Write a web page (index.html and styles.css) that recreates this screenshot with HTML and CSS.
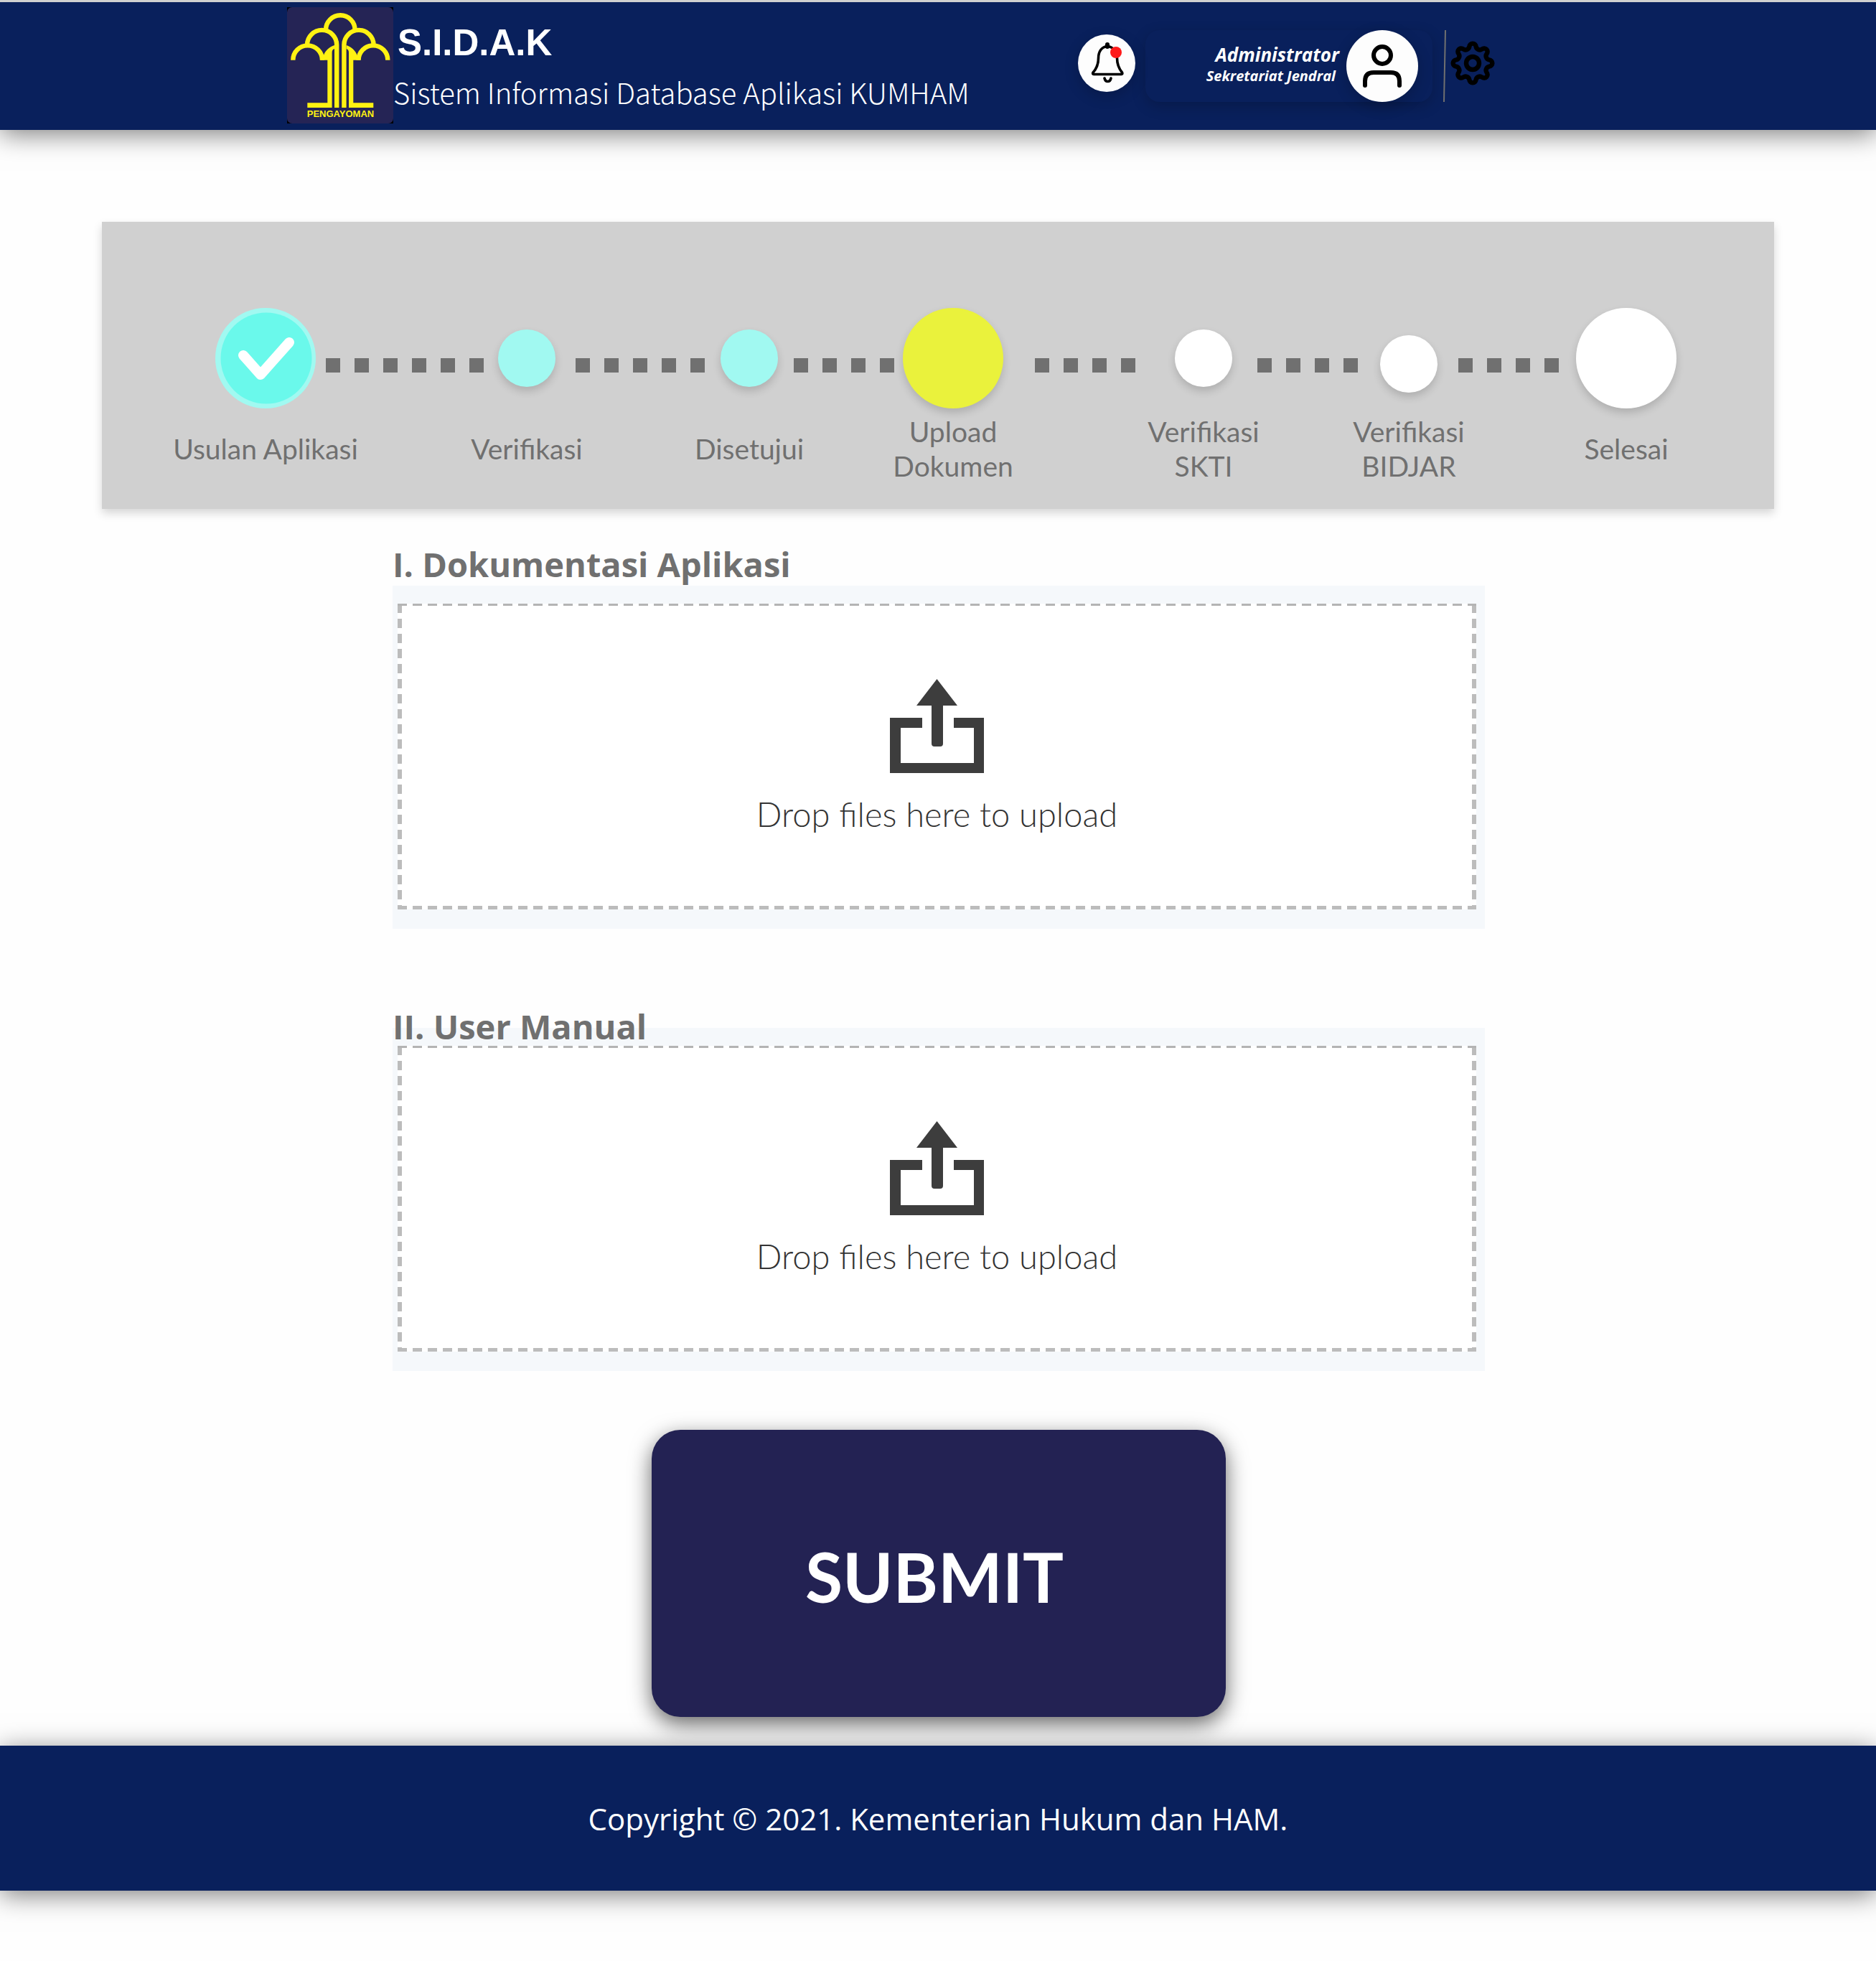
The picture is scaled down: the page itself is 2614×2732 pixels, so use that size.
FILE: index.html
```html
<!DOCTYPE html>
<html lang="id">
<head>
<meta charset="utf-8">
<meta name="viewport" content="width=device-width, initial-scale=1">
<title>S.I.D.A.K</title>
<link rel="stylesheet" href="styles.css">
</head>
<body>
<header class="topbar">
  <div class="brand">
    <svg class="brand-logo" viewBox="0 0 148 162" role="img" aria-label="Pengayoman">
      <rect width="148" height="162" fill="#000"/>
      <rect width="148" height="162" rx="7" fill="#252455"/>
      <g fill="none" stroke="#fff212" stroke-width="6.4">
        <path d="M54 31.5A20.3 20.3 0 0 1 94.6 31.5"/>
        <path d="M28 52.5A20.5 20.5 0 0 1 69.2 52.5V140"/>
        <path d="M120.6 52.5A20.5 20.5 0 0 0 79.4 52.5V140"/>
        <path d="M8.3 73.7A20 20 0 0 1 49 73.7"/>
        <path d="M140.3 73.7A20 20 0 0 0 99.6 73.7"/>
      </g>
      <g fill="#fff212">
        <path d="M46 73.7 51 67C53 61 59 55 66 53V58Q62.6 59 62.6 63V140H28.3V133.3H56.3V73.7Z"/>
        <path d="M102.6 73.7 97.6 67C95.6 61 89.6 55 82.6 53V58Q86 59 86 63V140H120.3V133.3H92.3V73.7Z"/>
      </g>
      <text class="logo-text" x="74.5" y="153" text-anchor="middle">PENGAYOMAN</text>
    </svg>
    <div class="brand-text">
      <h1 class="brand-title">S.I.D.A.K</h1>
      <p class="brand-subtitle">Sistem Informasi Database Aplikasi KUMHAM</p>
    </div>
  </div>
  <div class="tools">
    <button class="bell" type="button" aria-label="Notifikasi">
      <svg viewBox="0 0 80 80" fill="none" stroke="#000" stroke-width="3.6" stroke-linecap="round" stroke-linejoin="round">
        <path d="M41 14V17" stroke-width="6"/>
        <path d="M41 16.5C33 17 28.5 24 28.5 33C28.5 42 26 47.5 21 53Q20 55.500 22 55.500H60.500Q62.500 55.500 61.500 53C57 47.500 54.500 42 54.500 33C54.500 24 49 17 41 16.500Z"/>
        <path d="M37 61Q38 65.500 41.500 65.500T46 61"/>
        <circle cx="53" cy="25" r="8" fill="#ff1a1a" stroke="none"/>
      </svg>
    </button>
    <div class="profile">
      <div class="profile-text">
        <span class="profile-name">Administrator</span>
        <span class="profile-unit">Sekretariat Jendral</span>
      </div>
      <svg class="avatar" viewBox="0 0 100 100" fill="none" stroke="#000" stroke-width="6" stroke-linecap="round" role="img" aria-label="Profil">
        <circle cx="50" cy="35" r="12"/>
        <path d="M26 77V71Q26 59 38 59H62Q74 59 74 71V77"/>
      </svg>
    </div>
    <svg class="divider" viewBox="0 0 4 100" aria-hidden="true"><path d="M3 0L1 100" stroke="#707070" stroke-width="2"/></svg>
    <button class="gear" type="button" aria-label="Pengaturan">
      <svg viewBox="-31 -31 62 62" fill="none" stroke="#000" stroke-width="6.4" stroke-linejoin="round">
        <circle r="9"/>
        <path d="M-4.590-23.050A4.600 4.600 0 0 1 4.590-23.050A5.500 5.500 0 0 0 13.060-19.540A4.600 4.600 0 0 1 19.540-13.060A5.500 5.500 0 0 0 23.050-4.590A4.600 4.600 0 0 1 23.050 4.590A5.500 5.500 0 0 0 19.540 13.060A4.600 4.600 0 0 1 13.060 19.540A5.500 5.500 0 0 0 4.590 23.050A4.600 4.600 0 0 1-4.590 23.050A5.500 5.500 0 0 0-13.060 19.540A4.600 4.600 0 0 1-19.540 13.060A5.500 5.500 0 0 0-23.050 4.590A4.600 4.600 0 0 1-23.050-4.590A5.500 5.500 0 0 0-19.540-13.060A4.600 4.600 0 0 1-13.060-19.540A5.500 5.500 0 0 0-4.590-23.050Z"/>
      </svg>
    </button>
  </div>
</header>

<main>
  <ol class="steps">
    <li class="step">
      <span class="marker"><svg class="dot-check" viewBox="0 0 140 140" role="img" aria-label="Selesai">
        <circle cx="70" cy="70" r="70" fill="#a1f9f1"/>
        <circle cx="71" cy="70" r="63.5" fill="#6af9eb"/>
        <path d="M39 66L63 93L103 48" fill="none" stroke="#fff" stroke-width="14" stroke-linecap="round" stroke-linejoin="round"/>
      </svg></span>
      <span class="step-label">Usulan Aplikasi</span>
    </li>
    <li class="link" aria-hidden="true"></li>
    <li class="step"><span class="marker"><span class="dot dot-done"></span></span><span class="step-label">Verifikasi</span></li>
    <li class="link" aria-hidden="true"></li>
    <li class="step"><span class="marker"><span class="dot dot-done"></span></span><span class="step-label">Disetujui</span></li>
    <li class="link" aria-hidden="true"></li>
    <li class="step" aria-current="step"><span class="marker"><span class="dot dot-large dot-current"></span></span><span class="step-label">Upload<br>Dokumen</span></li>
    <li class="link" aria-hidden="true"></li>
    <li class="step"><span class="marker"><span class="dot"></span></span><span class="step-label">Verifikasi<br>SKTI</span></li>
    <li class="link" aria-hidden="true"></li>
    <li class="step"><span class="marker marker-inline"><span class="dot"></span></span><span class="step-label">Verifikasi<br>BIDJAR</span></li>
    <li class="link" aria-hidden="true"></li>
    <li class="step"><span class="marker"><span class="dot dot-large"></span></span><span class="step-label">Selesai</span></li>
  </ol>

  <form class="documents">
    <section class="document">
      <h2 class="document-title">I. Dokumentasi Aplikasi</h2>
      <label class="dropzone">
        <input class="file-input" type="file" name="dokumentasi" multiple>
        <span class="drop-area">
          <svg class="upload-icon" viewBox="0 0 132 134" fill="#3d3d3d" aria-hidden="true">
            <path d="M65.5 0L94 37H74V90Q74 94 70 94H62Q58 94 58 90V37H37Z"/>
            <path d="M0 54H45V68H15V117H117V68H89V54H131V131H0Z"/>
          </svg>
          <span class="drop-text">Drop files here to upload</span>
        </span>
      </label>
    </section>
    <section class="document">
      <h2 class="document-title document-title-over">II. User Manual</h2>
      <label class="dropzone">
        <input class="file-input" type="file" name="manual" multiple>
        <span class="drop-area">
          <svg class="upload-icon" viewBox="0 0 132 134" fill="#3d3d3d" aria-hidden="true">
            <path d="M65.5 0L94 37H74V90Q74 94 70 94H62Q58 94 58 90V37H37Z"/>
            <path d="M0 54H45V68H15V117H117V68H89V54H131V131H0Z"/>
          </svg>
          <span class="drop-text">Drop files here to upload</span>
        </span>
      </label>
    </section>
    <button class="submit" type="submit">SUBMIT</button>
  </form>
</main>

<footer class="footer">Copyright © 2021. Kementerian Hukum dan HAM.</footer>
</body>
</html>
```

FILE: styles.css
```css
* {
  box-sizing: border-box;
}

body {
  margin: 0;
  min-height: 100vh;
  background: #fefefe;
  font-family: "Open Sans", "Noto Sans", sans-serif;
  color: #707070;
}

h1, h2, p, ol {
  margin: 0;
  padding: 0;
}

button {
  border: 0;
  padding: 0;
  cursor: pointer;
}

svg {
  display: block;
}

/* Header */
.topbar {
  display: flex;
  justify-content: space-between;
  align-items: flex-start;
  height: 181px;
  padding: 7px 531px 0 400px;
  border-top: 3px solid #d0d0d0;
  background: #09205c;
  box-shadow: 0 6px 34px rgba(0, 0, 0, .5);
}

.brand {
  display: flex;
}

.brand-logo {
  width: 148px;
  height: 162px;
}

.logo-text {
  font: bold 13px "Liberation Sans", Arial, sans-serif;
  fill: #fff212;
}

.brand-text {
  display: flex;
  flex-direction: column;
  padding-top: 20px;
  white-space: nowrap;
  color: #fff;
}

.brand-title {
  padding-left: 6px;
  font: bold 51px/60px "Liberation Sans", Arial, sans-serif;
}

.brand-subtitle {
  padding-top: 14px;
  font: 200 40px/48px "Noto Sans CJK JP", sans-serif;
}

.tools {
  display: flex;
  align-items: center;
  padding-top: 32px;
}

.bell {
  width: 80px;
  height: 80px;
  margin: 0 14px 8px 0;
  border-radius: 50%;
  background: #fdfdfd;
  box-shadow: 0 6px 20px rgba(0, 0, 0, .2);
}

.profile {
  display: flex;
  justify-content: flex-end;
  align-items: center;
  gap: 10px;
  width: 400px;
  height: 100px;
  padding-right: 20px;
  border-radius: 20px;
  box-shadow: 0 6px 20px rgba(0, 0, 0, .2);
}

.profile-text {
  display: flex;
  flex-direction: column;
  align-items: flex-end;
  padding-bottom: 4px;
  color: #fff;
  font-style: italic;
  font-weight: 700;
  white-space: nowrap;
}

.profile-name {
  font-size: 26px;
  line-height: 32px;
}

.profile-unit {
  padding-right: 5px;
  font-size: 20px;
  line-height: 28px;
}

.avatar {
  width: 100px;
  height: 100px;
  border-radius: 50%;
  background: #fdfdfd;
  box-shadow: 0 6px 20px rgba(0, 0, 0, .2);
}

.divider {
  width: 4px;
  height: 100px;
  margin: 0 6px 0 15px;
}

.gear {
  width: 62px;
  height: 62px;
  margin-bottom: 8px;
  background: none;
}

/* Progress */
.steps {
  display: grid;
  grid-template-columns:
    140px 14fr 220px 20fr
    80px 28fr 180px 22fr
    80px 22fr 140px 12fr
    140px 44fr 140px 55fr
    80px 35fr 140px 31fr
    80px 29fr 140px 24fr
    140px;
  margin: 128px 142px 0;
  padding: 120px 136px 36px 158px;
  background: #d0d0d0;
  box-shadow: 0 6px 12px rgba(0, 0, 0, .16);
  list-style: none;
}

.step {
  display: flex;
  flex-direction: column;
  align-items: center;
  gap: 8px;
}

.step:nth-child(n + 2),
.link {
  grid-row: 1;
}

.step:nth-child(1) { grid-column: 1; }
.link:nth-child(2) { grid-column: 3; }
.step:nth-child(3) { grid-column: 5; }
.link:nth-child(4) { grid-column: 7; }
.step:nth-child(5) { grid-column: 9; }
.link:nth-child(6) { grid-column: 11; }
.step:nth-child(7) { grid-column: 13; }
.link:nth-child(8) { grid-column: 15; }
.step:nth-child(9) { grid-column: 17; }
.link:nth-child(10) { grid-column: 19; }
.step:nth-child(11) { grid-column: 21; }
.link:nth-child(12) { grid-column: 23; }
.step:nth-child(13) { grid-column: 25; }

.marker {
  display: flex;
  align-items: center;
  height: 140px;
}

.marker-inline {
  padding-top: 16px;
}

.dot-check {
  width: 140px;
  height: 140px;
}

.dot {
  width: 80px;
  height: 80px;
  border-radius: 50%;
  background: #fff;
  box-shadow: 0 6px 12px rgba(0, 0, 0, .16);
}

.dot-large {
  width: 140px;
  height: 140px;
}

.dot-done {
  background: #a1f9f1;
}

.dot-current {
  background: #eaf23c;
}

.link {
  height: 20px;
  margin-top: 70px;
  background: repeating-linear-gradient(90deg, #707070 0 20px, transparent 20px 40px);
}

.step-label {
  display: flex;
  align-items: center;
  height: 96px;
  font: 39px/48px Lato, sans-serif;
  text-align: center;
  white-space: nowrap;
}

/* Upload form */
.documents {
  display: flex;
  flex-direction: column;
  padding: 40px 545px 40px 547px;
}

.document {
  display: flex;
  flex-direction: column;
  margin-bottom: 82px;
}

.document-title {
  height: 67px;
  font-size: 47px;
  line-height: 74px;
}

/* The second title sits across the top edge of its drop zone */
.document-title-over {
  position: relative;
  height: 56px;
  line-height: 108px;
}

.dropzone {
  padding: 25px 12px 27px 7px;
  background: #f5f8fb;
  cursor: pointer;
}

.file-input {
  position: absolute;
  width: 1px;
  height: 1px;
  opacity: 0;
}

.drop-area {
  display: flex;
  flex-direction: column;
  align-items: center;
  height: 426px;
  padding-top: 105px;
  background:
    repeating-linear-gradient(90deg, #b4b4b4 0 13px, #fff 13px 21px) top / 100% 3px no-repeat,
    repeating-linear-gradient(90deg, #bcbcbc 0 13px, #fff 13px 21px) bottom / 100% 5px no-repeat,
    repeating-linear-gradient(#bcbcbc 0 13px, #fff 13px 21px) left / 6px 100% no-repeat,
    repeating-linear-gradient(#bcbcbc 0 13px, #fff 13px 21px) right / 6px 100% no-repeat,
    #fff;
}

.upload-icon {
  width: 132px;
  height: 134px;
}

.drop-text {
  padding-top: 24px;
  font: 300 47px/60px Lato, sans-serif;
  color: #333;
}

.submit {
  align-self: center;
  width: 800px;
  height: 400px;
  padding: 8px 12px 0 0;
  border-radius: 40px;
  background: #232253;
  box-shadow: 0 10px 30px rgba(0, 0, 0, .6);
  font: 700 95px/120px Lato, sans-serif;
  color: #fff;
}

/* Footer */
.footer {
  padding: 72px 0 70px;
  background: #09205c;
  box-shadow: 0 6px 34px rgba(0, 0, 0, .5);
  font-size: 42px;
  line-height: 60px;
  text-align: center;
  color: #fff;
}
```
